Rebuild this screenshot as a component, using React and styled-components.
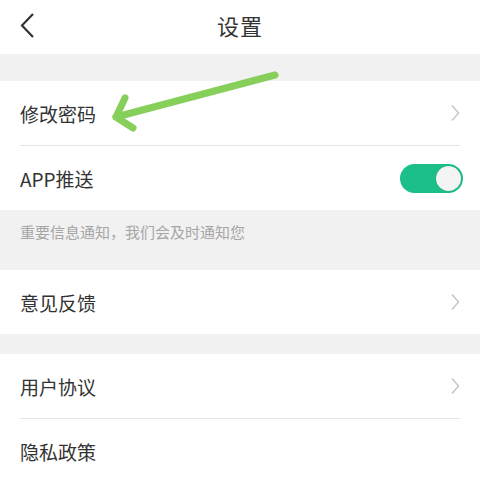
import styled, { createGlobalStyle } from "styled-components";

const GlobalStyle = createGlobalStyle`
  html, body {
    margin: 0;
    padding: 0;
    background: #fff;
  }
  body {
    font-family: "Noto Sans CJK SC", "Noto Sans", sans-serif;
  }
`;

export default function App() {
  return (
    <Page>
      <GlobalStyle />
      <Header>
        <BackButton>
          <svg width="16" height="26" viewBox="0 0 16 26">
            <path d="M13 1 L2 12.5 L13 24" fill="none" stroke="#333" strokeWidth="2.2" />
          </svg>
        </BackButton>
        <Title>设置</Title>
      </Header>

      <Gap $h={27} />

      <Group>
        <Row>
          <Label>修改密码</Label>
          <Chevron />
        </Row>
        <Row $last>
          <Label>APP推送</Label>
          <Toggle>
            <Knob />
          </Toggle>
        </Row>
      </Group>

      <Hint>重要信息通知，我们会及时通知您</Hint>

      <Group>
        <Row $last>
          <Label>意见反馈</Label>
          <Chevron />
        </Row>
      </Group>

      <Gap $h={20} />

      <Group>
        <Row>
          <Label>用户协议</Label>
          <Chevron />
        </Row>
        <Row $last>
          <Label>隐私政策</Label>
        </Row>
      </Group>

      <Annotation width="480" height="479" viewBox="0 0 480 479">
        <g stroke="#86cf5a" strokeWidth="7" strokeLinecap="round" fill="none">
          <path d="M275 75 L116 117" />
          <path d="M125 98 L116 117 L133 128" strokeLinejoin="round" />
        </g>
      </Annotation>
    </Page>
  );
}

function Chevron() {
  return (
    <ChevronIcon width="10" height="18" viewBox="0 0 10 18">
      <path d="M2 1.5 L8.5 9 L2 16.5" fill="none" stroke="#c8c8c8" strokeWidth="1.6" />
    </ChevronIcon>
  );
}

const Page = styled.div`
  position: relative;
  width: 480px;
  height: 479px;
  overflow: hidden;
  background: #f1f1f1;
`;

const Header = styled.div`
  position: relative;
  height: 54px;
  background: #fff;
  display: flex;
  align-items: center;
  justify-content: center;
`;

const BackButton = styled.div`
  position: absolute;
  left: 20px;
  top: 13px;
  display: flex;
`;

const Title = styled.div`
  font-size: 22px;
  line-height: 22px;
  margin-top: -4px;
  color: #333;
  letter-spacing: 1px;
`;

const Gap = styled.div`
  height: ${(p) => p.$h}px;
`;

const Group = styled.div`
  background: #fff;
`;

const Row = styled.div`
  height: 64px;
  margin: 0 20px;
  display: flex;
  align-items: center;
  justify-content: space-between;
  border-bottom: ${(p) => (p.$last ? "none" : "1px solid #e6e6e6")};
  box-sizing: content-box;
`;

const Label = styled.div`
  font-size: 19px;
  color: #333;
`;

const ChevronIcon = styled.svg`
  margin-right: 0;
`;

const Toggle = styled.div`
  width: 63px;
  height: 29px;
  border-radius: 15px;
  background: #1cbf8a;
  display: flex;
  align-items: center;
  justify-content: flex-end;
  padding: 0 2px;
  box-sizing: border-box;
  margin-right: -3px;
`;

const Knob = styled.div`
  width: 25px;
  height: 25px;
  border-radius: 50%;
  background: #f4f4f4;
  box-shadow: 0 0 1px rgba(0, 0, 0, 0.3);
`;

const Hint = styled.div`
  height: 60px;
  box-sizing: border-box;
  padding: 12px 0 0 20px;
  font-size: 15px;
  line-height: 20px;
  color: #a6a6a6;
`;

const Annotation = styled.svg`
  position: absolute;
  left: 0;
  top: 0;
  pointer-events: none;
`;
